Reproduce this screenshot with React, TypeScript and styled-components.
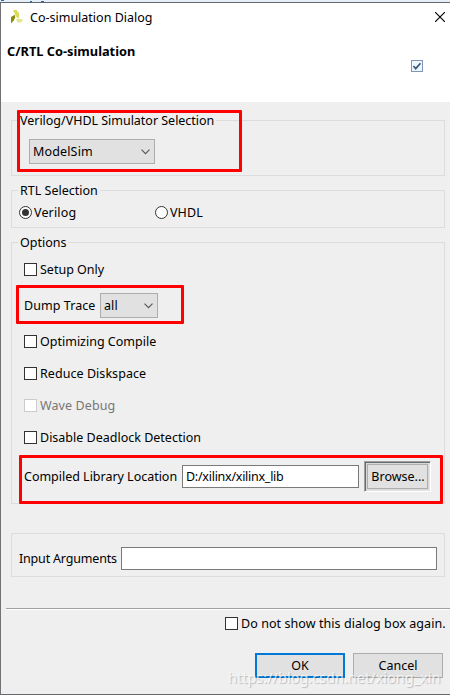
import React from "react";
import styled, { createGlobalStyle } from "styled-components";

const GlobalStyle = createGlobalStyle`
  * { box-sizing: border-box; }
  body { margin: 0; background: #efefef; overflow: hidden; }
`;

const Window = styled.div`
  position: relative;
  display: flex;
  flex-direction: column;
  width: 450px;
  height: 695px;
  border-left: 1px solid #707276;
  border-bottom: 1px solid #68686c;
  background: #efefef;
  color: #000;
  font: 12.5px/17px "Noto Sans", "Open Sans", sans-serif;
  white-space: pre;
`;

const Backdrop = styled.div`
  height: 3px;
  flex: none;
  margin-left: -1px;
  background:
    linear-gradient(#2667a8, #2667a8) 1px 0 / 3px 1px no-repeat,
    linear-gradient(#2667a8, #2667a8) 30px 1px / 2px 1px no-repeat,
    linear-gradient(#2667a8, #2667a8) 41px 1px / 3px 1px no-repeat,
    #e6eef8;
  border-bottom: 1px solid #616970;
`;

const Header = styled.header`
  height: 99px;
  flex: none;
  background: #fff;
`;

const TitleBar = styled.div`
  display: flex;
  align-items: center;
  height: 28px;
  padding: 0 5px 0 9px;
`;

const Title = styled.span`
  flex: 1;
  margin-left: 7px;
`;

const HeadingRow = styled.div`
  display: flex;
  justify-content: space-between;
  padding: 11px 27px 0 6px;
`;

const Heading = styled.h1`
  margin: 0;
  font-size: 12.8px;
  line-height: 18px;
  font-weight: 700;
`;

const HeaderCheck = styled.svg`
  margin-top: 18px;
`;

const Label = styled.span<{ $track?: number; $disabled?: boolean }>`
  letter-spacing: ${(p) => p.$track ?? 0}px;
  color: ${(p) => (p.$disabled ? "#777" : "inherit")};
`;

const Content = styled.main`
  display: flex;
  flex-direction: column;
  flex: none;
  height: 506px;
  padding: 18px 5px 0 10px;
`;

const Group = styled.fieldset<{ $height: number; $gap?: number }>`
  position: relative;
  flex: none;
  display: flow-root;
  min-width: 0;
  height: ${(p) => p.$height}px;
  margin: 0 0 ${(p) => p.$gap ?? 0}px;
  padding: 0;
  border: 1px solid #dcdcdc;
`;

const GroupTitle = styled.div`
  width: max-content;
  height: 17px;
  margin: -9px 0 0 6px;
  padding: 0 2px;
  background: #efefef;
`;

const Row = styled.div<{ $height: number; $indent?: number; $top?: number }>`
  display: flex;
  align-items: center;
  height: ${(p) => p.$height}px;
  margin-top: ${(p) => p.$top ?? 0}px;
  padding-left: ${(p) => p.$indent ?? 12}px;
`;

const Select = styled.div<{ $width: number }>`
  display: flex;
  align-items: center;
  justify-content: space-between;
  width: ${(p) => p.$width}px;
  height: 25px;
  padding: 0 4px 0 3px;
  border: 1px solid #adadad;
  background: #e1e1e1;
`;

const Option = styled.label<{ $width?: number; $gap?: number }>`
  display: flex;
  align-items: center;
  gap: ${(p) => p.$gap ?? 2}px;
  width: ${(p) => (p.$width ? `${p.$width}px` : "auto")};
`;

const CheckBox = styled.span<{ $disabled?: boolean }>`
  flex: none;
  width: 13px;
  height: 13px;
  border: 1px solid ${(p) => (p.$disabled ? "#ccc" : "#333")};
  background: #fff;
`;

const Radio = styled.span<{ $on?: boolean }>`
  display: grid;
  place-items: center;
  width: 13px;
  height: 13px;
  border: 1px solid #333;
  border-radius: 50%;
  background: #fff;
  &::after {
    content: "";
    width: 7px;
    height: 7px;
    border-radius: 50%;
    background: ${(p) => (p.$on ? "#333" : "transparent")};
  }
`;

const TextField = styled.div<{ $width: number }>`
  display: flex;
  align-items: center;
  width: ${(p) => p.$width}px;
  height: 23px;
  padding-left: 3px;
  border: 1px solid #7a7a7a;
  background: #fff;
`;

const BrowseFrame = styled.div`
  margin-left: 5px;
  width: 67px;
  height: 31px;
  padding: 1px;
  border: 1px solid;
  border-color: #a0a0a0 #fff #fff #a0a0a0;
  box-shadow: inset 1px 1px #696969, inset -1px -1px #e3e3e3;
`;

const BrowseButton = styled.button`
  display: block;
  width: 63px;
  height: 27px;
  padding: 0 0 0 1px;
  border: 1px solid #d9d9d9;
  outline: 1px solid #adadad;
  outline-offset: -2px;
  background: #e1e1e1;
  color: inherit;
  font: inherit;
`;

const Separator = styled.div`
  flex: none;
  height: 2px;
  margin-left: 5px;
  border-top: 1px solid #a0a0a0;
  background: #fff;
`;

const Footer = styled.footer`
  flex: none;
  padding: 5px 7px 0 0;
`;

const FooterOption = styled.div`
  display: flex;
  height: 17px;
  padding-left: 224px;
`;

const Buttons = styled.div`
  display: flex;
  justify-content: flex-end;
  gap: 8px;
  margin-top: 21px;
`;

const Button = styled.button<{ $primary?: boolean }>`
  width: 90px;
  height: 25px;
  padding: 0;
  border: ${(p) => (p.$primary ? "2px solid #0078d7" : "1px solid #adadad")};
  background: #e1e1e1;
  color: inherit;
  font: inherit;
  line-height: 17px;
`;

const Highlight = styled.div<{ $x: number; $y: number; $w: number; $h: number }>`
  position: absolute;
  left: ${(p) => p.$x}px;
  top: ${(p) => p.$y}px;
  width: ${(p) => p.$w}px;
  height: ${(p) => p.$h}px;
  border: 3px solid #f00;
  border-radius: 1px;
  pointer-events: none;
`;

const Watermark = styled.div`
  position: absolute;
  left: 227px;
  top: 667px;
  font-size: 14.5px;
  line-height: 20px;
  color: rgba(255, 255, 255, 0.75);
  text-shadow: 1px 1px 1px rgba(0, 0, 0, 0.22);
  pointer-events: none;
`;

const Chevron = () => (
  <svg width="9" height="6" viewBox="0 0 9 6" fill="none" stroke="#555" strokeWidth="1.1">
    <path d="M.5.7 4.5 4.7 8.5.7" />
  </svg>
);

const Logo = () => (
  <svg width="13" height="14" viewBox="0 0 13 14">
    <path d="M3 0H6.5L9 3V7.5L7.5 8.2 5.5 5.5Z" fill="#d9dc55" />
    <path d="M1 7 4.8 4.8 5.2 7.5 3.8 10.5 1 13.5Z" fill="#8a8a0c" />
    <path d="M6 9.2 9 8.5 13 10 11 12.6H7.5Z" fill="#e3e58c" />
  </svg>
);

type CheckProps = { text: string; track?: number; disabled?: boolean; gap?: number };
const CheckOption = ({ text, track, disabled, gap = 3 }: CheckProps) => (
  <Option $gap={gap}>
    <CheckBox $disabled={disabled} />
    <Label $track={track} $disabled={disabled}>{text}</Label>
  </Option>
);

export default function App() {
  return (
    <>
      <GlobalStyle />
      <Window>
        <Backdrop />
        <Header>
          <TitleBar>
            <Logo />
            <Title>Co-simulation Dialog</Title>
            <svg width="10" height="10" viewBox="0 0 10 10" stroke="#000" strokeWidth="1.15">
              <path d="M0 0 10 10M10 0 0 10" />
            </svg>
          </TitleBar>
          <HeadingRow>
            <Heading>C/RTL Co-simulation</Heading>
            <HeaderCheck width="12" height="12" viewBox="0 0 12 12">
              <rect x=".5" y=".5" width="11" height="11" fill="#eef8fc" stroke="#8095b5" />
              <path d="M2.5 6 4.7 8.6 9.5 3.2" fill="none" stroke="#3c5580" strokeWidth="1.7" />
            </HeaderCheck>
          </HeadingRow>
        </Header>

        <Content>
          <Group $height={56} $gap={14}>
            <GroupTitle>
              <Label $track={-0.02}>Verilog/VHDL Simulator Selection</Label>
            </GroupTitle>
            <Row $height={25} $indent={17} $top={10}>
              <Select $width={126}>
                <Label $track={0.15}>ModelSim</Label>
                <Chevron />
              </Select>
            </Row>
          </Group>

          <Group $height={38} $gap={14}>
            <GroupTitle>RTL Selection</GroupTitle>
            <Row $height={17} $indent={7} $top={5}>
              <Option $width={136}>
                <Radio $on />
                <Label $track={0.15}>Verilog</Label>
              </Option>
              <Option>
                <Radio />
                <Label $track={0.1}>VHDL</Label>
              </Option>
            </Row>
          </Group>

          <Group $height={262} $gap={29}>
            <GroupTitle>Options</GroupTitle>
            <Row $height={17} $top={10}>
              <CheckOption text="Setup Only" />
            </Row>
            <Row $height={25} $top={15}>
              <Option $width={76}>
                <Label $track={0.07}>Dump Trace</Label>
              </Option>
              <Select $width={58}>
                <Label $track={0.1}>all</Label>
                <Chevron />
              </Select>
            </Row>
            <Row $height={17} $top={15}>
              <CheckOption text="Optimizing Compile" />
            </Row>
            <Row $height={17} $top={15}>
              <CheckOption text="Reduce Diskspace" track={0.05} />
            </Row>
            <Row $height={17} $top={15}>
              <CheckOption text="Wave Debug" track={0.1} disabled />
            </Row>
            <Row $height={17} $top={15}>
              <CheckOption text="Disable Deadlock Detection" />
            </Row>
            <Row $height={31} $top={15}>
              <Option $width={158}>
                <Label $track={-0.02}>Compiled Library Location</Label>
              </Option>
              <TextField $width={177}>
                <Label $track={-0.26}>D:/xilinx/xilinx_lib</Label>
              </TextField>
              <BrowseFrame>
                <BrowseButton>Browse...</BrowseButton>
              </BrowseFrame>
            </Row>
          </Group>

          <Group $height={44}>
            <Row $height={23} $indent={7} $top={13}>
              <Option $width={102}>
                <Label $track={-0.18}>Input Arguments</Label>
              </Option>
              <TextField $width={316} />
            </Row>
          </Group>
        </Content>

        <Separator />
        <Footer>
          <FooterOption>
            <CheckOption text="Do not show this dialog box again." track={0.07} />
          </FooterOption>
          <Buttons>
            <Button $primary>OK</Button>
            <Button>Cancel</Button>
          </Buttons>
        </Footer>

        <Highlight $x={16} $y={110} $w={225} $h={62} />
        <Highlight $x={15} $y={285} $w={168} $h={39} />
        <Highlight $x={18} $y={455} $w={424} $h={49} />
        <Watermark>https://blog.csdn.net/xiong_xin</Watermark>
      </Window>
    </>
  );
}
